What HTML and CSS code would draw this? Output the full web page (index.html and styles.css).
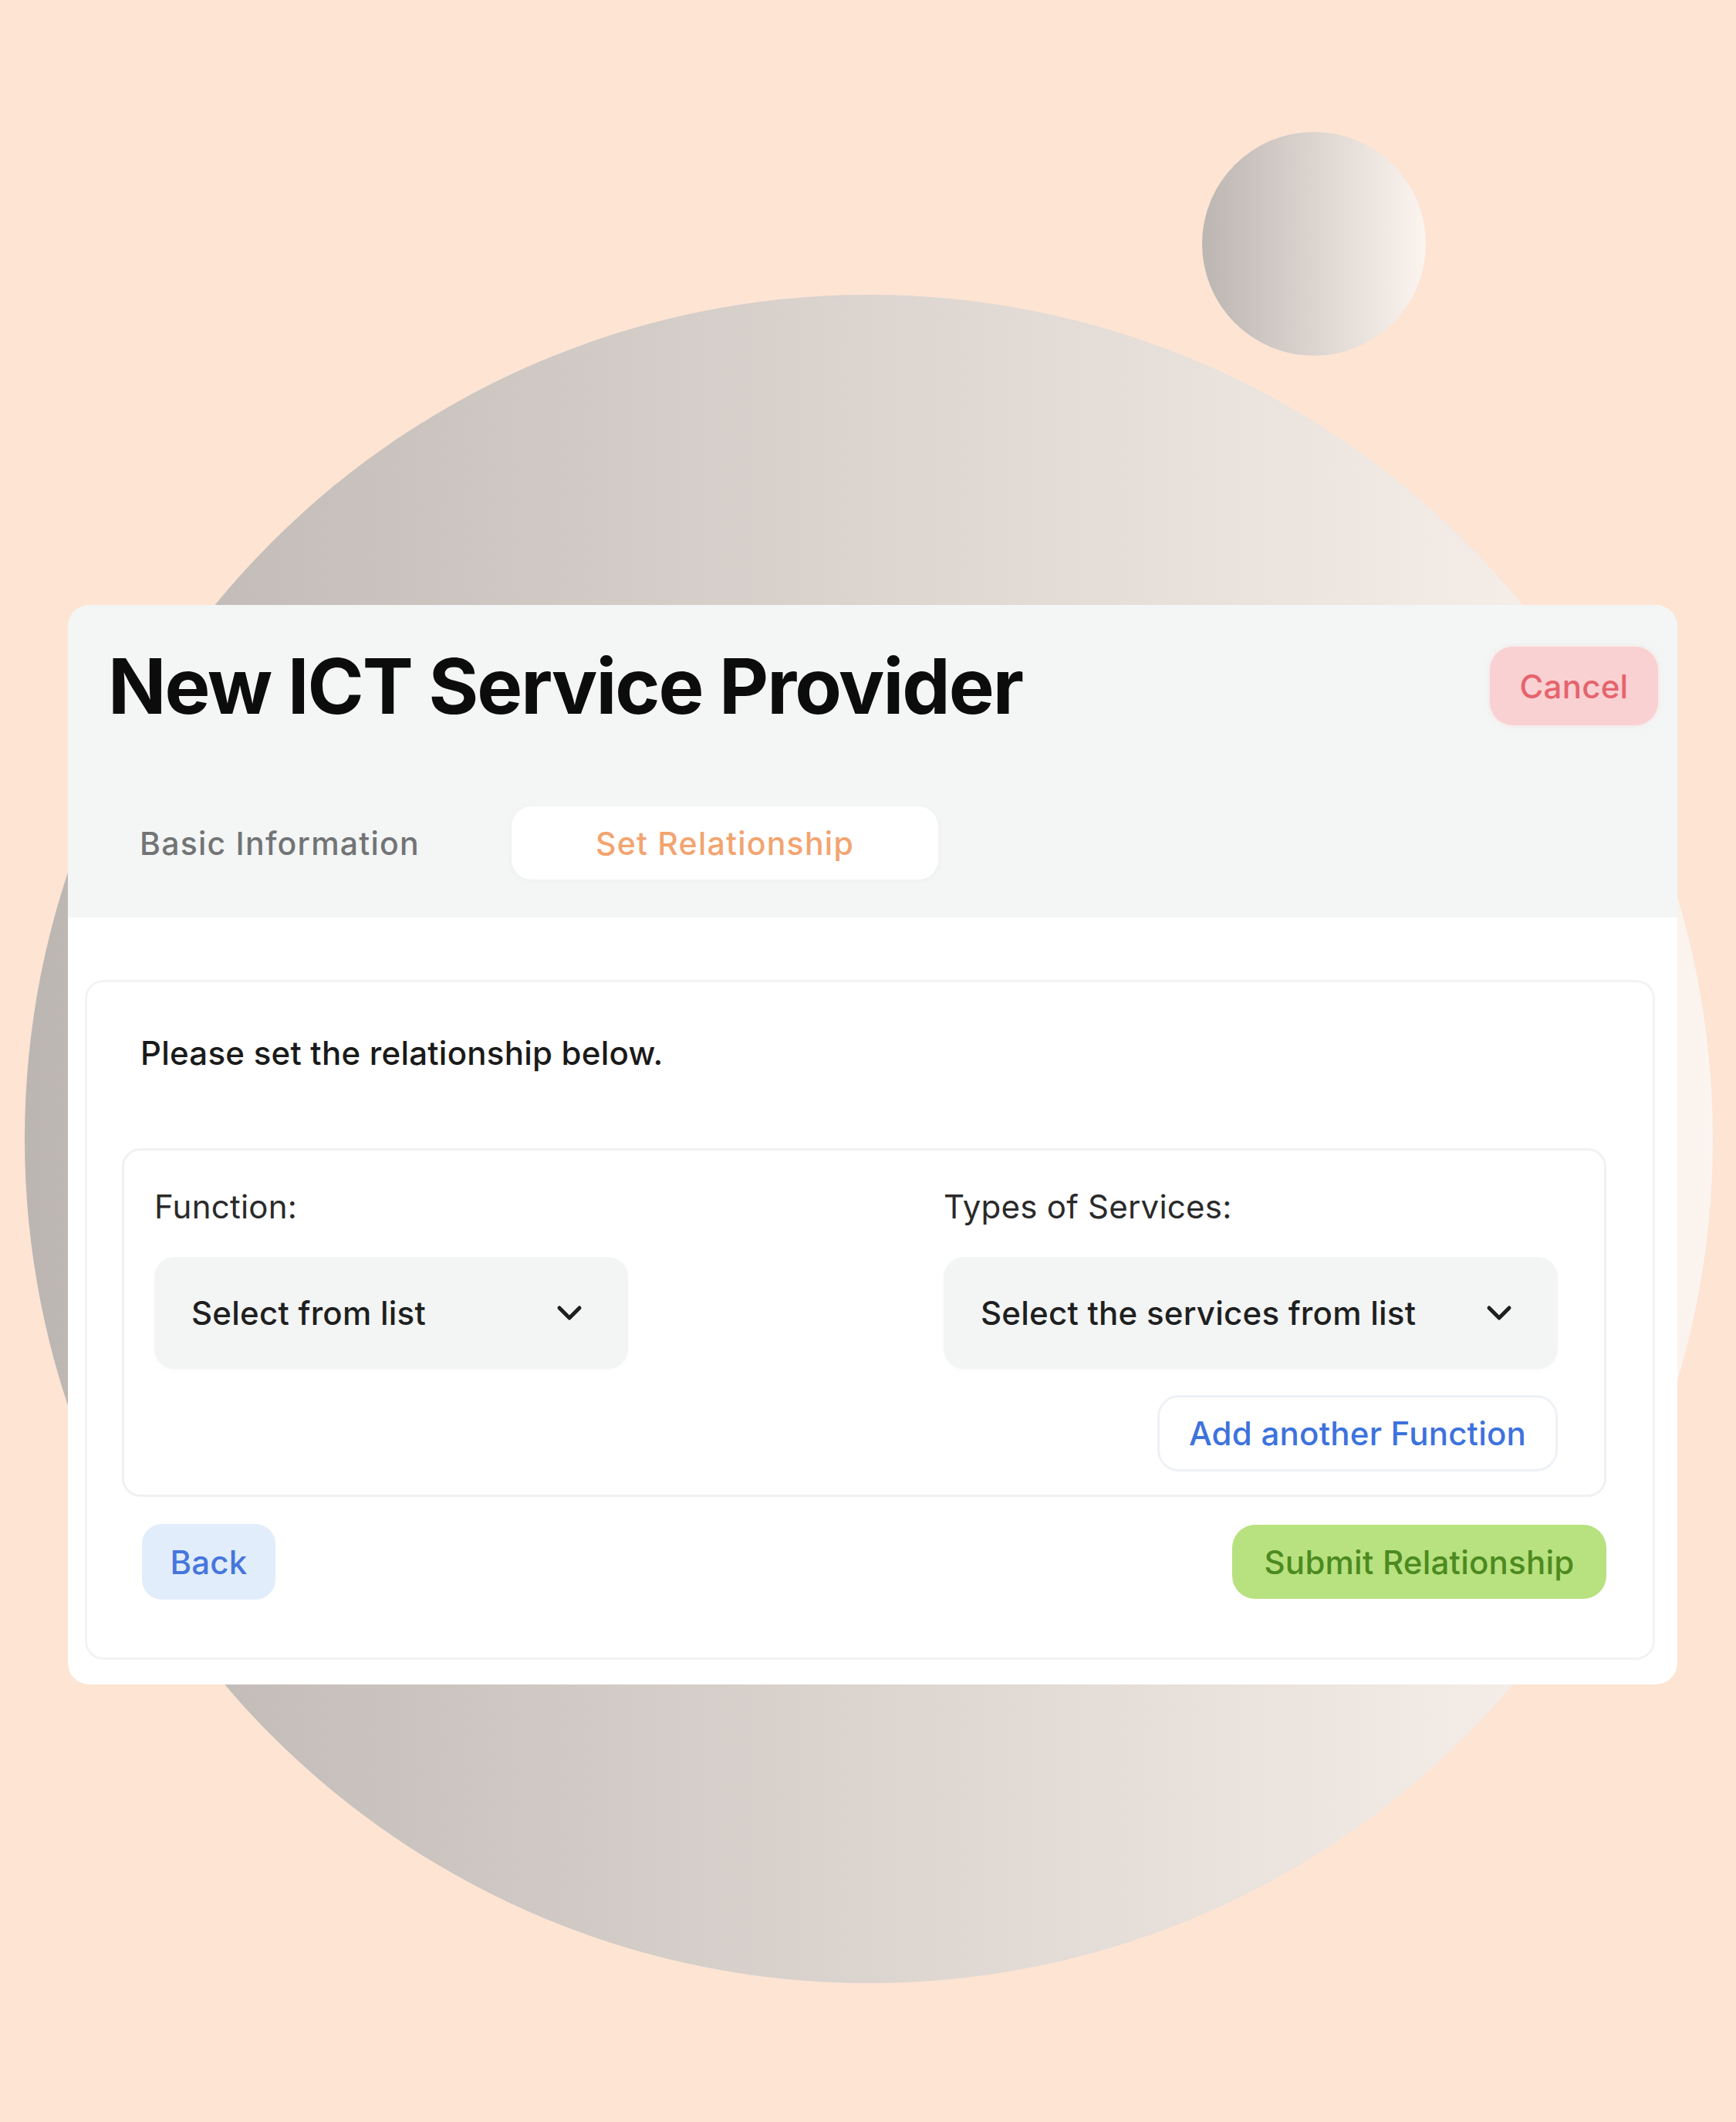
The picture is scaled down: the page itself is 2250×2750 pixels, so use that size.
FILE: index.html
```html
<!DOCTYPE html>
<html lang="en">
    <head>
        <title>New ICT Service Provider</title>
        <meta charset="UTF-8">
        <meta name="viewport" content="width=device-width, initial-scale=1">
        <link rel="stylesheet" href="styles.css">
    </head>
    <body>

        <div class="blob blob-big"></div>
        <div class="blob blob-small"></div>

        <div id="provider">
            <header class="provider-head">
                <div class="title-row">
                    <h1>New ICT Service Provider</h1>
                    <button class="btn cancel">Cancel</button>
                </div>
                <nav class="tabs">
                    <span class="tab">Basic Information</span>
                    <span class="tab active">Set Relationship</span>
                </nav>
            </header>

            <div class="provider-body">
                <div class="panel">
                    <p class="intro">Please set the relationship below.</p>

                    <div class="relation">
                        <div class="field">
                            <label>Function:</label>
                            <div class="select select-fn">
                                <span>Select from list</span>
                                <svg width="34" height="22" viewBox="0 0 34 22"><polyline points="4,4 17,17 30,4" /></svg>
                            </div>
                        </div>
                        <div class="field">
                            <label>Types of Services:</label>
                            <div class="select">
                                <span>Select the services from list</span>
                                <svg width="34" height="22" viewBox="0 0 34 22"><polyline points="4,4 17,17 30,4" /></svg>
                            </div>
                            <button class="btn add">Add another Function</button>
                        </div>
                    </div>

                    <div class="buttons">
                        <button class="btn back">Back</button>
                        <button class="btn submit">Submit Relationship</button>
                    </div>
                </div>
            </div>
        </div>

    </body>
</html>
```

FILE: styles.css
```css
html {
    box-sizing: border-box;
}
*, *::before, *::after {
    box-sizing: inherit;
}
body {
    margin: 0;
    width: 2250px;
    height: 2750px;
    padding: 784px 0 0 88px;
    position: relative;
    overflow: hidden;
    background: #fde4d3;
    font-family: 'Inter', 'Liberation Sans', sans-serif;
    color: #1d1d1d;
    letter-spacing: 0.015em;
}

/* background circles */
.blob {
    position: absolute;
    border-radius: 50%;
    background: linear-gradient(to right, #bcb6b2, #d8d1cc 45%, #fbf4ef);
}
.blob-big {
    left: 32px;
    top: 382px;
    width: 2188px;
    height: 2188px;
}
.blob-small {
    left: 1558px;
    top: 171px;
    width: 290px;
    height: 290px;
}

#provider {
    position: relative;
    width: 2086px;
    border-radius: 28px;
    background: #fff;
    overflow: hidden;
}

.btn {
    border: none;
    font-family: inherit;
    font-size: 42px;
    font-weight: 500;
    letter-spacing: inherit;
    cursor: pointer;
    display: flex;
    align-items: center;
    justify-content: center;
    padding: 0;
}

/* header */
.provider-head {
    background: #f3f6f5;
    padding: 54px 25px 49px 52px;
}
    .title-row {
        display: flex;
        justify-content: space-between;
        align-items: center;
    }
        .title-row h1 {
            margin: 0;
            font-size: 99px;
            line-height: 1;
            font-weight: 700;
            letter-spacing: -0.02em;
            color: #0c0c0c;
        }
        .cancel {
            width: 218px;
            height: 102px;
            border-radius: 30px;
            background: #f9d1d3;
            color: #e5646c;
            box-shadow: 0 0 6px rgba(249, 209, 211, .6);
        }
    .tabs {
        display: flex;
        gap: 78px;
        margin-top: 105px;
    }
        .tab {
            height: 95px;
            padding: 0 41px;
            display: flex;
            align-items: center;
            font-size: 41px;
            font-weight: 500;
            letter-spacing: 0.03em;
            color: #727476;
        }
        .tab.active {
            width: 553px;
            justify-content: center;
            background: #fff;
            border-radius: 26px;
            color: #f2a470;
            box-shadow: 0 2px 8px rgba(0, 0, 0, .03);
        }

/* body */
.provider-body {
    padding: 81px 29px 32px 22px;
}
    .panel {
        border: 3px solid #f3f3f3;
        border-radius: 24px;
        padding: 67px 60px 75px 45px;
    }
        .intro {
            margin: 0 0 98px 24px;
            font-size: 42px;
            line-height: 50px;
            font-weight: 500;
            color: #1a1a1a;
        }
        .relation {
            display: grid;
            grid-template-columns: 1fr 796px;
            border: 3px solid #f1f1f1;
            border-radius: 24px;
            padding: 48px 60px 30px 39px;
        }
            .field label {
                display: block;
                font-size: 42px;
                line-height: 50px;
                color: #2a2a2a;
                margin-bottom: 40px;
            }
            .select {
                height: 145px;
                display: flex;
                align-items: center;
                justify-content: space-between;
                padding: 0 59px 0 48px;
                background: #f3f5f5;
                border-radius: 26px;
                font-size: 42px;
                font-weight: 500;
                color: #1f1f1f;
                box-shadow: 0 2px 6px rgba(0, 0, 0, .02);
            }
            .select-fn {
                width: 614px;
            }
                .select svg polyline {
                    fill: none;
                    stroke: #1f1f1f;
                    stroke-width: 5;
                    stroke-linecap: round;
                    stroke-linejoin: round;
                }
            .add {
                width: 519px;
                height: 99px;
                margin: 34px 0 0 auto;
                border: 3px solid #eef1f6;
                border-radius: 28px;
                background: #fff;
                color: #3d72dd;
            }
        .buttons {
            display: flex;
            justify-content: space-between;
            align-items: center;
            margin-top: 35px;
            padding-left: 26px;
        }
            .back {
                width: 173px;
                height: 98px;
                border-radius: 26px;
                background: #e1edfb;
                color: #4676dc;
            }
            .submit {
                width: 485px;
                height: 96px;
                border-radius: 30px;
                background: #b8e17f;
                color: #4c8a1f;
            }
```
